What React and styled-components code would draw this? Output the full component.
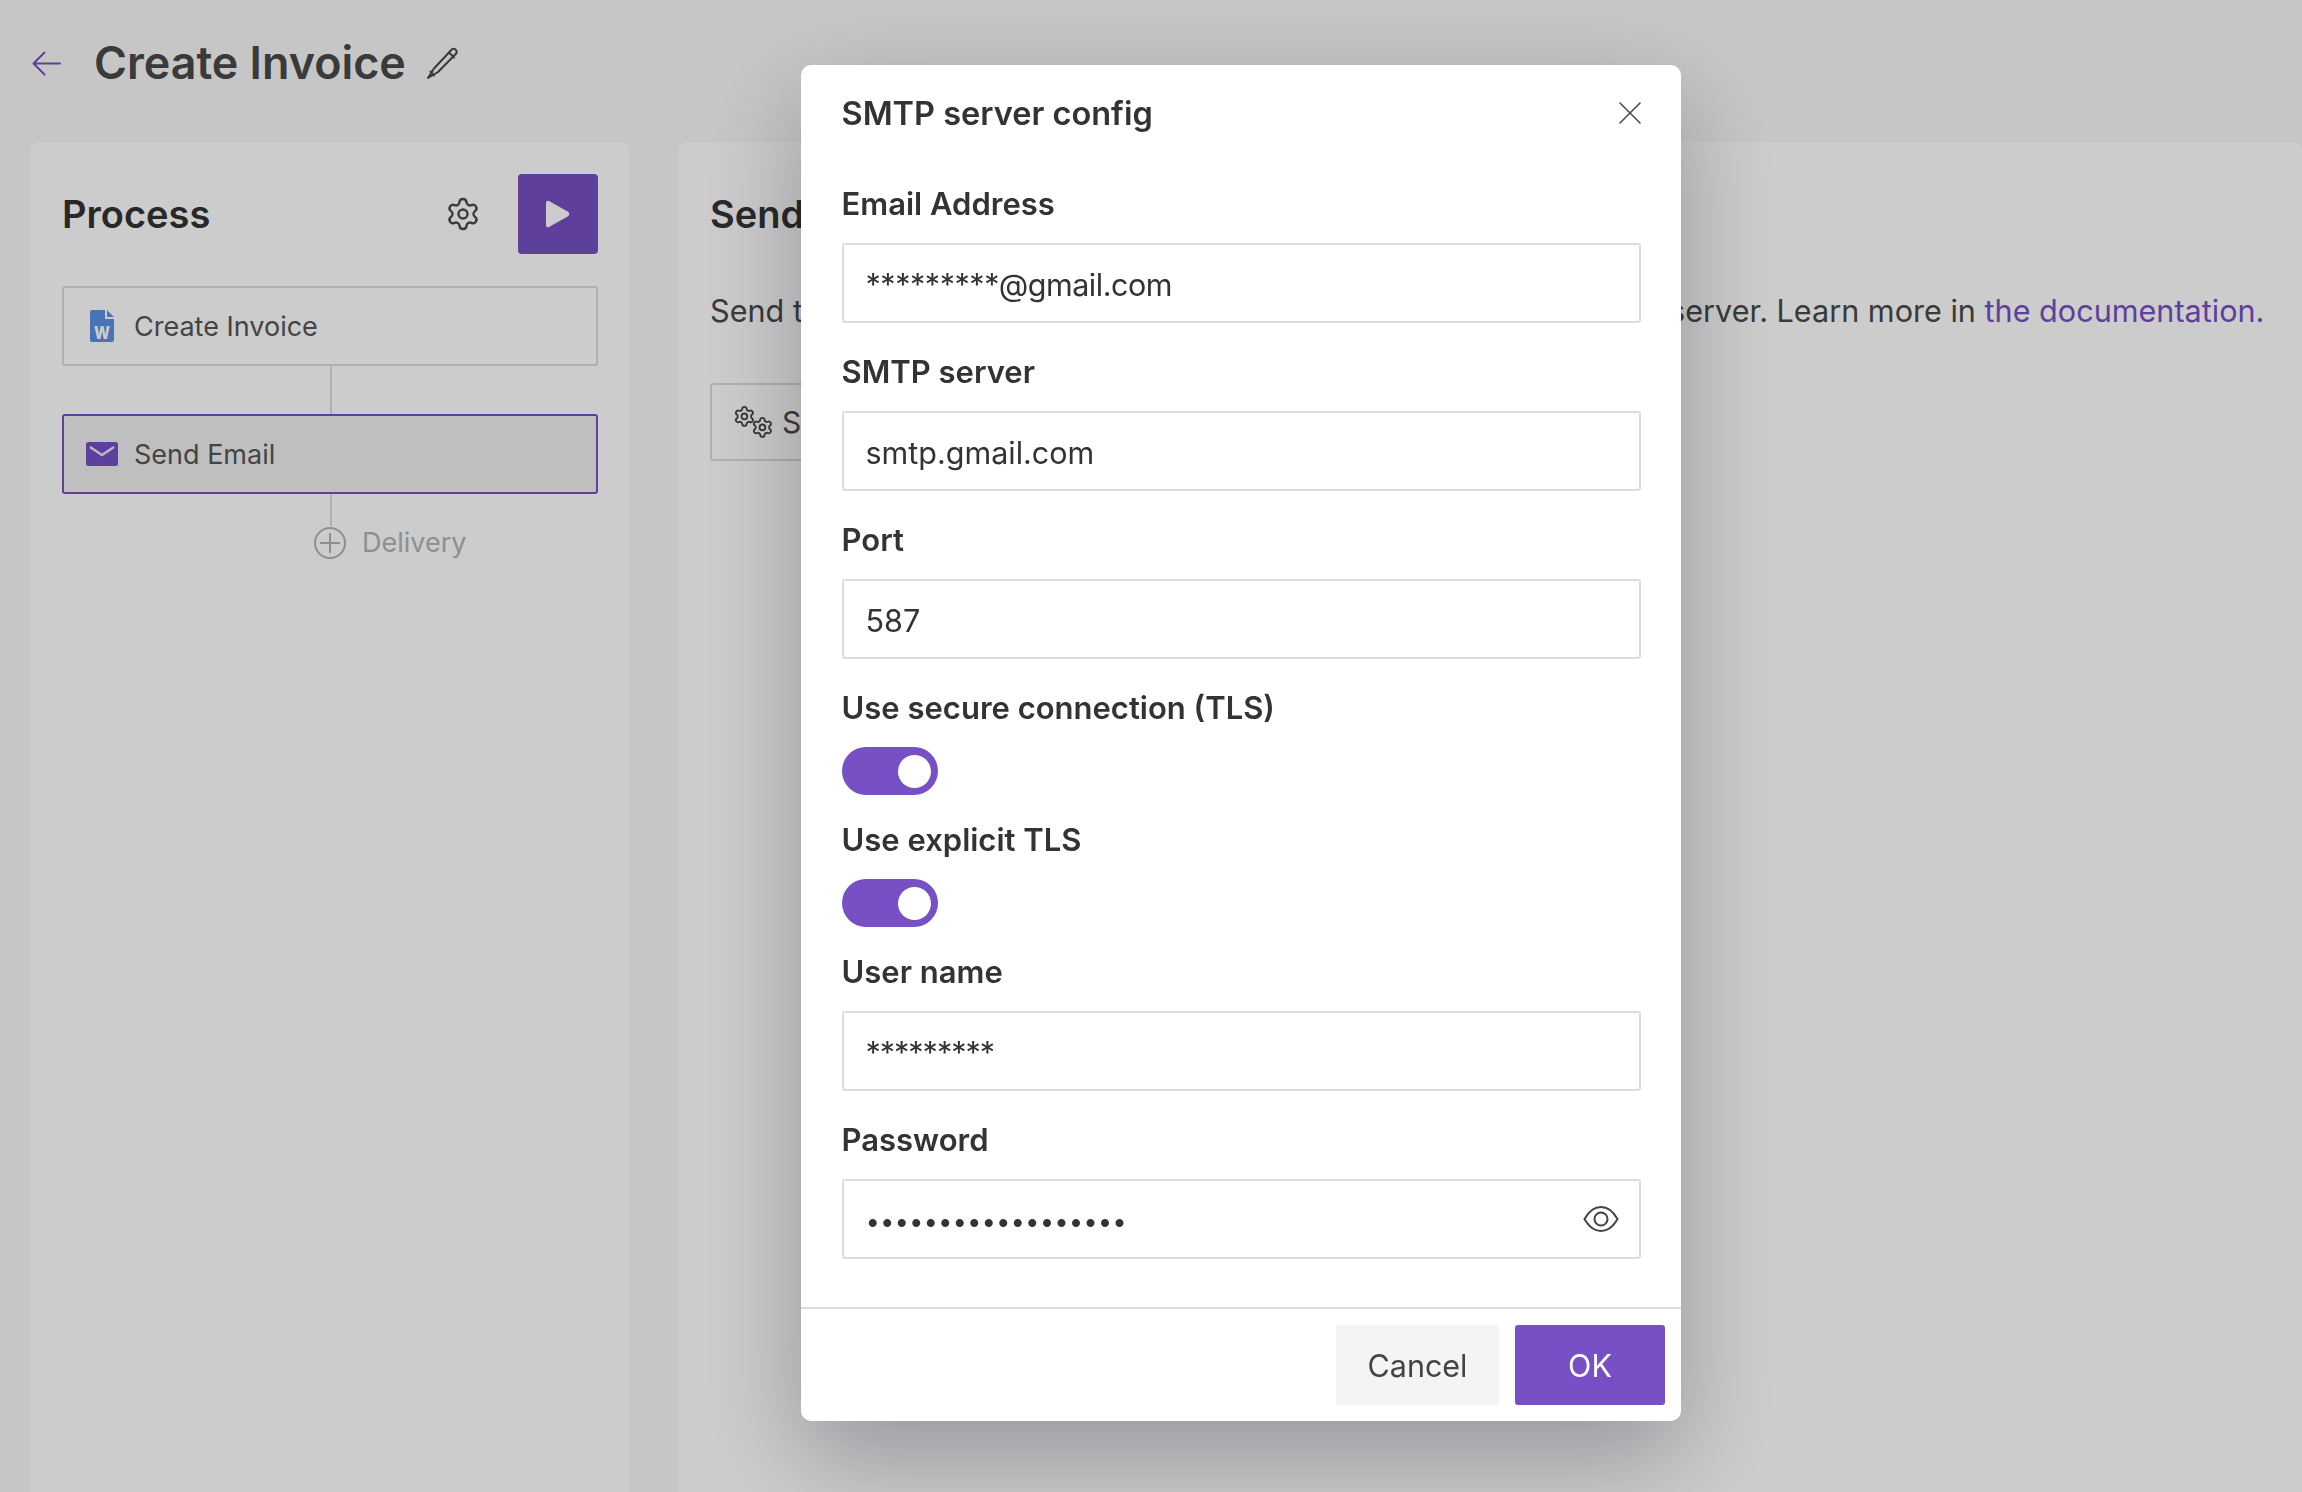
import React from "react";
import styled, { createGlobalStyle } from "styled-components";
import { Settings } from "lucide-react";

const GlobalStyle = createGlobalStyle`
  * {
    box-sizing: border-box;
  }
  html, body {
    margin: 0;
    padding: 0;
    background: #f8f8f8;
    font-family: Inter, "Noto Sans", "Liberation Sans", sans-serif;
    color: #494949;
  }
`;

const BackArrowIcon = () => (
  <svg width="29" height="25" viewBox="0 0 29 25" fill="none" stroke="currentColor" strokeWidth="2" strokeLinecap="round" strokeLinejoin="round">
    <path d="M28 12.5 H1.5 M12.5 1.5 L1.5 12.5 L12.5 23.5" />
  </svg>
);

const PencilIcon = () => (
  <svg width="32" height="32" viewBox="0 0 32 32" fill="none" stroke="#494949" strokeWidth="2" strokeLinejoin="round" strokeLinecap="round">
    <path d="M7 21.5 L24.5 2.8 a3 3 0 0 1 4.2 0 a3 3 0 0 1 0 4.2 L11 25 L1 31 Z" />
    <path d="M22 5.5 L27 10.5" />
    <path d="M3.5 24.5 L7 28.5" />
  </svg>
);

const PlayIcon = () => (
  <svg width="24" height="28" viewBox="0 0 24 28">
    <path d="M0 3 Q0 0 3 1 L22.5 12 Q24 14 22.5 16 L3 27 Q0 28 0 25 Z" fill="#fff" />
  </svg>
);

const WordIcon = () => (
  <svg width="24" height="32" viewBox="0 0 24 32">
    <path d="M2 0 H15 V9 H24 V30 a2 2 0 0 1 -2 2 H2 a2 2 0 0 1 -2 -2 V2 a2 2 0 0 1 2 -2 Z" fill="#5d90e3" />
    <path d="M17 0 L24 7 H17 Z" fill="#5d90e3" />
    <text x="12" y="28.5" fontFamily="Inter, sans-serif" fontSize="18" fontWeight="800" fill="#fff" textAnchor="middle" textLength="16" lengthAdjust="spacingAndGlyphs">W</text>
  </svg>
);

const MailIcon = () => (
  <svg width="32" height="24" viewBox="0 0 32 24">
    <rect width="32" height="24" rx="2.5" fill="#7650c4" />
    <path d="M4 5 L16 13 L28 5" fill="none" stroke="#fff" strokeWidth="2.4" strokeOpacity="0.85" />
  </svg>
);

const PlusCircleIcon = () => (
  <svg width="32" height="32" viewBox="0 0 32 32" fill="none" stroke="#b3b3b3" strokeWidth="2">
    <circle cx="16" cy="16" r="15" />
    <path d="M16 6 V26 M6 16 H26" />
  </svg>
);

const EyeIcon = () => (
  <svg width="36" height="28" viewBox="0 0 36 28" fill="none" stroke="#444" strokeWidth="2">
    <path d="M1.5 14 C6 6 11 2 18 2 C25 2 30 6 34.5 14 C30 22 25 26 18 26 C11 26 6 22 1.5 14 Z" />
    <circle cx="18" cy="14" r="6.5" />
  </svg>
);

const CloseIcon = () => (
  <svg width="22" height="22" viewBox="0 0 22 22" fill="none" stroke="currentColor" strokeWidth="1.5" strokeLinecap="round">
    <path d="M1 1 L21 21 M21 1 L1 21" />
  </svg>
);

const gearPath =
  "M9.671 4.136a2.34 2.34 0 0 1 4.659 0 2.34 2.34 0 0 0 3.319 1.915 2.34 2.34 0 0 1 2.33 4.033 2.34 2.34 0 0 0 0 3.831 2.34 2.34 0 0 1-2.33 4.033 2.34 2.34 0 0 0-3.319 1.915 2.34 2.34 0 0 1-4.659 0 2.34 2.34 0 0 0-3.32-1.915 2.34 2.34 0 0 1-2.33-4.033 2.34 2.34 0 0 0 0-3.831A2.34 2.34 0 0 1 6.35 6.051a2.34 2.34 0 0 0 3.319-1.915";

const DoubleGearIcon = () => (
  <svg width="42" height="34" viewBox="0 0 42 34" fill="none" stroke="#494949" strokeWidth="2">
    <g transform="translate(1 0) scale(0.95)">
      <path d={gearPath} />
      <circle cx="12" cy="12" r="3" />
    </g>
    <g transform="translate(19 11) scale(0.95)">
      <path d={gearPath} />
      <circle cx="12" cy="12" r="3" />
    </g>
  </svg>
);

const Page = styled.div`
  width: 2302px;
  height: 1492px;
  overflow: hidden;
  display: flex;
  flex-direction: column;
`;

const Header = styled.header`
  height: 126px;
  margin-bottom: 16px;
  flex: none;
  display: flex;
  align-items: center;
  padding-left: 32px;
`;

const BackLink = styled.span`
  display: flex;
  width: 62px;
  color: #7650c4;
`;

const PageTitle = styled.h1`
  margin: 0 21px 0 0;
  font-size: 44.8px;
  font-weight: 600;
  color: #494949;
`;

const Columns = styled.div`
  flex: 1;
  display: flex;
  gap: 49px;
  padding-left: 30px;
`;

const Panel = styled.section`
  background: #fff;
  border-radius: 8px 8px 0 0;
  padding: 32px 31px 0 32px;
  ${(p) => (p.$grow ? "flex: 1;" : "width: 599px; flex: none;")}
`;

const PanelHeader = styled.div`
  height: 80px;
  display: flex;
  align-items: center;
  gap: 37px;
`;

const PanelTitle = styled.h2`
  margin: 0;
  flex: 1;
  font-size: 38px;
  font-weight: 600;
  color: #333;
`;

const IconButton = styled.span`
  display: flex;
  color: #494949;
`;

const RunButton = styled.button`
  width: 80px;
  height: 80px;
  border: none;
  border-radius: 4px;
  background: #7650c4;
  display: flex;
  align-items: center;
  justify-content: center;
  padding: 0;
`;

const Flow = styled.div`
  margin-top: 32px;
  display: flex;
  flex-direction: column;
`;

const Node = styled.div`
  height: 80px;
  display: flex;
  align-items: center;
  border: 2px solid ${(p) => (p.$active ? "#7650c4" : "#dcdcdc")};
  background: ${(p) => (p.$active ? "#efefef" : "#fff")};
  border-radius: 3px;
  font-size: 27px;
  color: #555;
`;

const NodeIcon = styled.span`
  width: 70px;
  padding-left: ${(p) => (p.$wide ? "22px" : "26px")};
  display: flex;
  flex: none;
`;

const Connector = styled.div`
  width: 2px;
  height: ${(p) => p.$height}px;
  background: #dcdcdc;
  margin-left: 268px;
`;

const AddRow = styled.div`
  display: flex;
  align-items: center;
  gap: 16px;
  padding-left: 252px;
  font-size: 27px;
  color: #b3b3b3;
`;

const BodyText = styled.p`
  margin: 35px 0 0;
  font-size: 30.6px;
  line-height: 44px;
  white-space: nowrap;
  color: #494949;
`;

const DocLink = styled.a`
  color: #7650c4;
`;

const SettingsButton = styled.button`
  margin-top: 50px;
  width: 420px;
  height: 78px;
  display: flex;
  align-items: center;
  gap: 8px;
  padding: 0 0 0 20px;
  background: #fff;
  border: 2px solid #dcdcdc;
  border-radius: 3px;
  font-family: inherit;
  font-size: 30px;
  color: #494949;
`;

const Overlay = styled.div`
  position: fixed;
  inset: 0;
  background: rgba(0, 0, 0, 0.2);
  padding: 65px 0 0 801px;
`;

const Modal = styled.div`
  width: 880px;
  height: 1356px;
  background: #fff;
  border-radius: 10px;
  box-shadow: 0 36px 100px rgba(0, 0, 30, 0.27);
  display: flex;
  flex-direction: column;
  color: #333;
`;

const ModalHeader = styled.div`
  height: 94px;
  flex: none;
  display: flex;
  align-items: center;
  justify-content: space-between;
  padding: 2px 40px 0 40.5px;
`;

const ModalTitle = styled.h3`
  margin: 0;
  font-size: 32.5px;
  font-weight: 600;
  color: #333;
`;

const CloseButton = styled.span`
  display: flex;
  color: #444;
`;

const ModalBody = styled.div`
  flex: 1;
  padding: 0 40px 0 40.5px;
`;

const Field = styled.div`
  height: ${(p) => (p.$toggle ? 132 : 168)}px;
  padding-top: 26px;
  display: flex;
  flex-direction: column;
`;

const Label = styled.label`
  height: 58px;
  flex: none;
  font-size: 31px;
  line-height: 38px;
  font-weight: 600;
  color: #333;
`;

const InputWrap = styled.div`
  position: relative;
  height: 80px;
  flex: none;
`;

const TextInput = styled.input`
  width: 100%;
  height: 100%;
  border: 2px solid #dcdcdc;
  border-radius: 3px;
  padding: 2px 22px 0;
  outline: none;
  font-family: inherit;
  font-size: ${(p) => (p.type === "password" ? 25.8 : 30.5)}px;
  letter-spacing: ${(p) => p.$spacing || 0}px;
  color: #333;
  background: #fff;
`;

const EyeButton = styled.span`
  position: absolute;
  right: 22px;
  top: 26px;
  display: flex;
`;

const Toggle = styled.span`
  width: 96px;
  height: 48px;
  flex: none;
  border-radius: 24px;
  background: #7650c4;
  display: flex;
  align-items: center;
  justify-content: flex-end;
  padding-right: 7px;
`;

const Knob = styled.span`
  width: 33px;
  height: 33px;
  border-radius: 50%;
  background: #fff;
`;

const Footer = styled.div`
  height: 114px;
  flex: none;
  border-top: 2px solid #dcdcdc;
  display: flex;
  justify-content: flex-end;
  gap: 16px;
  padding: 16px 16px 0 0;
`;

const FooterButton = styled.button`
  width: ${(p) => (p.$primary ? 150 : 163)}px;
  height: 80px;
  border: none;
  border-radius: 3px;
  background: ${(p) => (p.$primary ? "#7650c4" : "#f4f4f4")};
  color: ${(p) => (p.$primary ? "#fff" : "#444")};
  font-family: inherit;
  font-size: 30.5px;
`;

const fields = [
  { label: "Email Address", value: "*********@gmail.com", spacing: -0.45 },
  { label: "SMTP server", value: "smtp.gmail.com" },
  { label: "Port", value: "587" },
  { label: "Use secure connection (TLS)", toggle: true },
  { label: "Use explicit TLS", toggle: true },
  { label: "User name", value: "*********", spacing: -1 },
  { label: "Password", value: "123456789012345678", secret: true },
];

export default function App() {
  return (
    <>
      <GlobalStyle />
      <Page>
        <Header>
          <BackLink>
            <BackArrowIcon />
          </BackLink>
          <PageTitle>Create Invoice</PageTitle>
          <PencilIcon />
        </Header>
        <Columns>
          <Panel>
            <PanelHeader>
              <PanelTitle>Process</PanelTitle>
              <IconButton>
                <Settings size={36} strokeWidth={1.6} />
              </IconButton>
              <RunButton>
                <PlayIcon />
              </RunButton>
            </PanelHeader>
            <Flow>
              <Node>
                <NodeIcon>
                  <WordIcon />
                </NodeIcon>
                Create Invoice
              </Node>
              <Connector $height={48} />
              <Node $active>
                <NodeIcon $wide>
                  <MailIcon />
                </NodeIcon>
                Send Email
              </Node>
              <Connector $height={32} />
              <AddRow>
                <PlusCircleIcon />
                Delivery
              </AddRow>
            </Flow>
          </Panel>
          <Panel $grow>
            <PanelHeader>
              <PanelTitle>Send Email</PanelTitle>
            </PanelHeader>
            <BodyText>
              Send the invoice via email. You need to configure your own SMTP server. Learn more in{" "}
              <DocLink>the documentation.</DocLink>
            </BodyText>
            <SettingsButton>
              <DoubleGearIcon />
              SMTP server config
            </SettingsButton>
          </Panel>
        </Columns>
      </Page>
      <Overlay>
        <Modal>
          <ModalHeader>
            <ModalTitle>SMTP server config</ModalTitle>
            <CloseButton>
              <CloseIcon />
            </CloseButton>
          </ModalHeader>
          <ModalBody>
            {fields.map((f) => (
              <Field key={f.label} $toggle={f.toggle}>
                <Label>{f.label}</Label>
                {f.toggle ? (
                  <Toggle>
                    <Knob />
                  </Toggle>
                ) : (
                  <InputWrap>
                    <TextInput readOnly type={f.secret ? "password" : "text"} value={f.value} $spacing={f.spacing} />
                    {f.secret && (
                      <EyeButton>
                        <EyeIcon />
                      </EyeButton>
                    )}
                  </InputWrap>
                )}
              </Field>
            ))}
          </ModalBody>
          <Footer>
            <FooterButton>Cancel</FooterButton>
            <FooterButton $primary>OK</FooterButton>
          </Footer>
        </Modal>
      </Overlay>
    </>
  );
}
